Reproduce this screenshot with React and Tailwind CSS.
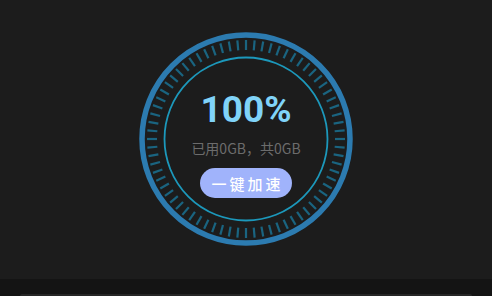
import React from "react";

const ticks = Array.from({ length: 72 }, (_, i) => i * 5);

function Gauge() {
    return (
        <svg width="216" height="216" viewBox="0 0 216 216" className="block">
            <circle cx="108" cy="108" r="104" fill="none" stroke="#2c7bb0" strokeWidth="5.5" />
            {ticks.map((deg) => (
                <line
                    key={deg}
                    x1="108"
                    y1={108 - 89}
                    x2="108"
                    y2={108 - 99}
                    stroke="#1a6480"
                    strokeWidth="2.2"
                    transform={`rotate(${deg} 108 108)`}
                />
            ))}
            <circle cx="108" cy="108" r="81.5" fill="none" stroke="#1c98bb" strokeWidth="1.8" />
        </svg>
    );
}

export default function App() {
    return (
        <div className="w-[492px] h-[296px] overflow-hidden flex flex-col bg-[#141414] font-['Roboto','Noto_Sans_CJK_SC',sans-serif]">
            <section className="h-[279px] bg-[#1c1c1c] flex justify-center">
                <div className="relative mt-[31px] w-[216px] h-[216px]">
                    <Gauge />
                    <div className="absolute inset-0 flex flex-col items-center pt-[60px]">
                        <div className="text-[37px] leading-[37px] font-bold text-[#80d3f8]">100%</div>
                        <div className="mt-[10px] text-[14px] leading-[20px] text-[#6c6c6c] font-['Noto_Sans_CJK_SC',sans-serif]">已用0GB，共0GB</div>
                        <button className="mt-[10px] w-[92px] h-[30px] rounded-full bg-[#a0b3fb] text-white text-[15px] leading-none tracking-[3px] pl-[3px] font-medium font-['Noto_Sans_CJK_SC',sans-serif]">
                            一键加速
                        </button>
                    </div>
                </div>
            </section>
            <section className="flex-1 pt-[15px] px-[20px]">
                <div className="h-full rounded-t-xl bg-[#262626]"></div>
            </section>
        </div>
    );
}
